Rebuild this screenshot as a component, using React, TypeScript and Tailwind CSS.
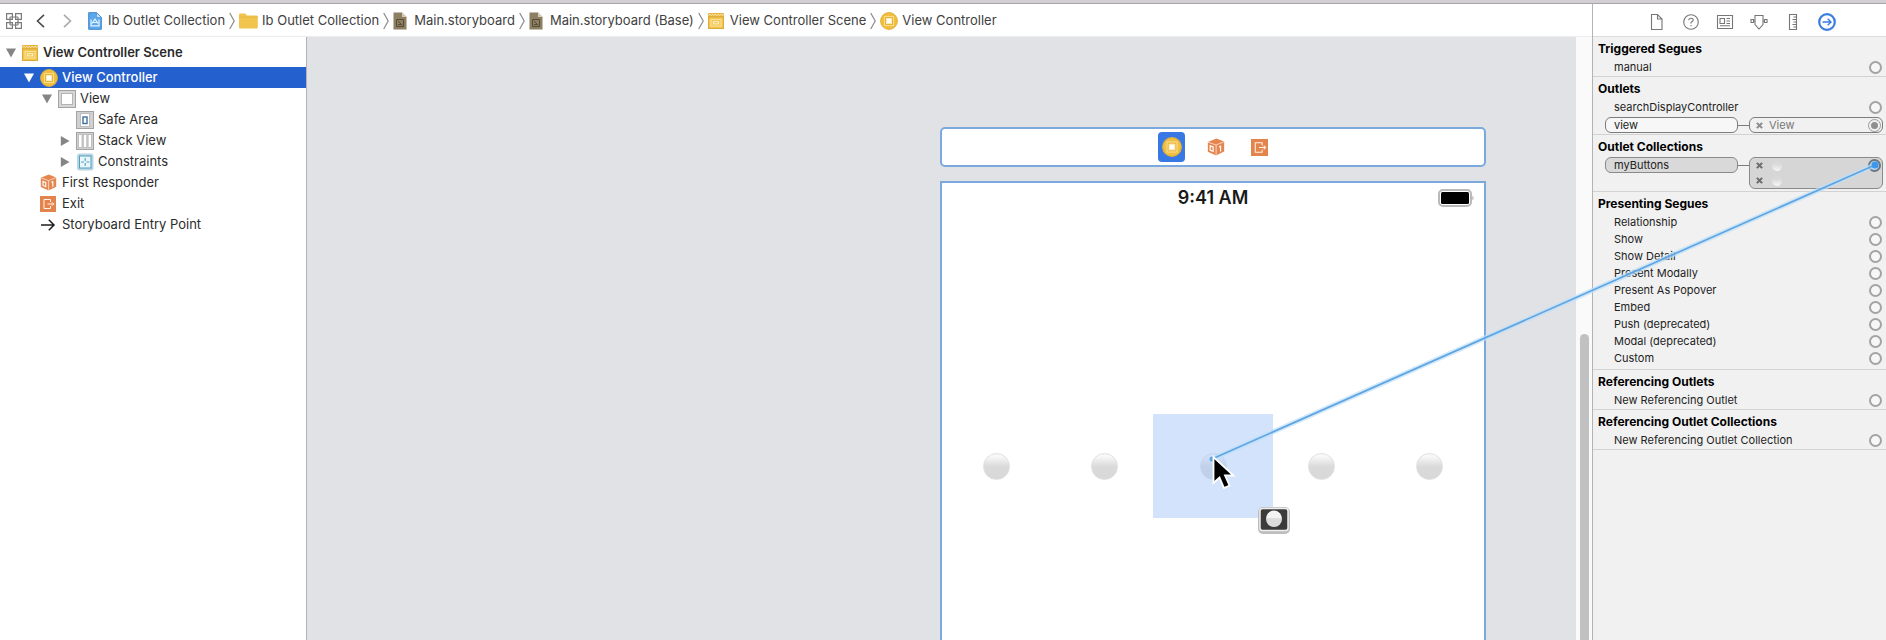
import React from "react";

type IconProps = { className?: string };

const SceneIcon = ({ className = "size-4" }: IconProps) => (
  <svg viewBox="0 0 16 16" className={className} aria-hidden="true">
    <rect x="0" y="0" width="16" height="16" rx="1" fill="#e5b440" />
    <rect x="0.5" y="4" width="15" height="11.5" fill="#f2c650" stroke="#dba936" />
    <path d="M0.6 2.6l1.4-1.4 1.4 1.4 1.4-1.4 1.4 1.4 1.4-1.4 1.4 1.4 1.4-1.4 1.4 1.4 1.4-1.4 1.4 1.4 1.4-1.4" fill="none" stroke="#fff3c4" strokeWidth="1" />
    <rect x="3" y="6.5" width="10" height="6.5" fill="none" stroke="#fbe39a" />
    <rect x="5.3" y="8.7" width="5.4" height="2.2" fill="#f2c650" stroke="#fff6d6" strokeWidth="0.9" />
  </svg>
);

const ControllerIcon = ({ className = "size-[18px]" }: IconProps) => (
  <svg viewBox="0 0 18 18" className={className} aria-hidden="true">
    <circle cx="9" cy="9" r="8.4" fill="#f0bf40" stroke="#e3b03a" strokeWidth="1" />
    <rect x="4.5" y="4.5" width="9" height="9" fill="#e9b335" stroke="#f9de8c" />
    <rect x="6.5" y="6.5" width="5" height="5" fill="#fff" stroke="#fbeab4" />
  </svg>
);

const FolderIcon = () => (
  <svg viewBox="0 0 19 16" className="h-4 w-[19px]" aria-hidden="true">
    <path d="M0 1.5Q0 0.5 1 0.5H6.2L8 2.5H17.5Q18.8 2.5 18.8 3.8V14.5Q18.8 15.6 17.6 15.6H1.2Q0 15.6 0 14.5Z" fill="#f1c44e" />
    <path d="M0 4H18.8" stroke="#e5b43e" strokeWidth="0.8" />
  </svg>
);

const ProjectIcon = () => (
  <svg viewBox="0 0 14 18" className="h-[18px] w-3.5" aria-hidden="true">
    <path d="M0.7 0.7H8.6L13.3 5.4V17.3H0.7Z" fill="#5ba8ec" stroke="#3f86cc" />
    <path d="M8.6 0.7V5.4H13.3Z" fill="#d4eafb" stroke="#3f86cc" strokeWidth="0.6" />
    <path d="M3 7.5V13.8H11V7.5M4 11.5L7 7 10 11.5M5 10.5H9" fill="none" stroke="#e6f4ff" strokeWidth="1.2" />
  </svg>
);

const StoryboardIcon = () => (
  <svg viewBox="0 0 14 18" className="h-[18px] w-3.5" aria-hidden="true">
    <path d="M0.5 0.5H9L13.5 5V17.5H0.5Z" fill="#8c7f62" />
    <path d="M9 0.5V5H13.5Z" fill="#d3cdbd" />
    <path d="M3.5 7.5H10.5V14.5H3.5Z M5 9L9.5 13.5 M5 12.5H8" fill="none" stroke="#574d36" strokeWidth="1" />
  </svg>
);

const ViewIcon = () => (
  <svg viewBox="0 0 18 18" className="size-[18px]" aria-hidden="true">
    <rect x="0.5" y="0.5" width="17" height="17" fill="#d6d6d6" stroke="#a3a3a3" />
    <rect x="3.5" y="3.5" width="11" height="11" fill="#fff" stroke="#b4b4b4" />
  </svg>
);

const SafeAreaIcon = () => (
  <svg viewBox="0 0 18 18" className="size-[18px]" aria-hidden="true">
    <rect x="0.5" y="0.5" width="17" height="17" fill="#d0d0d0" stroke="#a3a3a3" />
    <rect x="4.5" y="2.5" width="9" height="13" fill="#fff" stroke="#bdbdbd" />
    <rect x="7" y="6" width="4" height="6.5" fill="#fff" stroke="#3f6f9c" strokeWidth="1.4" />
  </svg>
);

const StackIcon = () => (
  <svg viewBox="0 0 18 18" className="size-[18px]" aria-hidden="true">
    <rect x="0.5" y="0.5" width="17" height="17" fill="#d0d0d0" stroke="#a3a3a3" />
    <rect x="2.5" y="2.5" width="3.5" height="13" fill="#fff" stroke="#b4b4b4" strokeWidth="0.8" />
    <rect x="7.3" y="2.5" width="3.5" height="13" fill="#fff" stroke="#b4b4b4" strokeWidth="0.8" />
    <rect x="12.1" y="2.5" width="3.5" height="13" fill="#fff" stroke="#b4b4b4" strokeWidth="0.8" />
  </svg>
);

const ConstraintsIcon = () => (
  <svg viewBox="0 0 18 18" className="size-[18px]" aria-hidden="true">
    <rect x="1" y="0.5" width="16.5" height="17" rx="2.5" fill="#b9d6e2" />
    <rect x="3.5" y="3" width="11.5" height="12" fill="#eaf6fb" stroke="#4f9fc0" />
    <path d="M9.2 5V8M9.2 10V13M5 9H8M10.4 9H13.4" stroke="#4f9fc0" strokeWidth="1.1" />
  </svg>
);

const ResponderIcon = ({ className = "size-[17px]" }: IconProps) => (
  <svg viewBox="0 0 17 17" className={className} aria-hidden="true">
    <path d="M8.8 0.4L16.2 3.4V12.8L8.6 16.6 0.8 13V3.8Z" fill="#e58650" />
    <path d="M0.8 3.9L8.6 6.6 16.2 3.5M8.6 6.6V16.4" fill="none" stroke="#fbe3d5" strokeWidth="0.8" />
    <path d="M11.4 8.6L12.8 7.8V12.8M3 7.4L5.8 8.4V12.6L3 11.4Z" fill="none" stroke="#fff" strokeWidth="1.1" />
  </svg>
);

const ExitIcon = ({ className = "size-4" }: IconProps) => (
  <svg viewBox="0 0 16 16" className={className} aria-hidden="true">
    <rect width="16" height="16" fill="#e4844d" />
    <path d="M10.500 6V3.500H4V12.500H10.500V10M7.500 8H13.500M12 6.300L13.700 8 12 9.700" fill="none" stroke="#fff2ea" strokeWidth="1" />
  </svg>
);

const EntryIcon = () => (
  <svg viewBox="0 0 16 16" className="size-4" aria-hidden="true">
    <path d="M1 8H14M8.8 2.8L14 8 8.8 13.2" fill="none" stroke="#1e1e1e" strokeWidth="1.5" />
  </svg>
);

const Crumb = ({ icon, label, gap = "gap-1.5", last }: { icon: React.ReactNode; label: string; gap?: string; last?: boolean }) => (
  <li className="flex items-center">
    <a href="#" className={`flex items-center whitespace-nowrap ${gap}`}>
      {icon}
      <span>{label}</span>
    </a>
    {!last && (
      <svg viewBox="0 0 6 18" className="mx-1 h-[18px] w-1.5" aria-hidden="true">
        <path d="M0.7 1L5.2 9 0.7 17" fill="none" stroke="#8a8a8a" strokeWidth="1.2" />
      </svg>
    )}
  </li>
);

const Triangle = ({ open, light }: { open?: boolean; light?: boolean }) => (
  <svg viewBox="0 0 10 10" className="size-2.5" aria-hidden="true">
    <path d={open ? "M0 0.5H10L5 9.5Z" : "M0.8 0L9.5 5 0.8 10Z"} fill={light ? "#fff" : "#858585"} />
  </svg>
);

type Node = { label: string; icon: React.ReactNode; pad: string; arrow?: "open" | "closed"; selected?: boolean };

const nodes: Node[] = [
  { label: "View Controller", icon: <ControllerIcon />, pad: "pl-6", arrow: "open", selected: true },
  { label: "View", icon: <ViewIcon />, pad: "pl-[42px]", arrow: "open" },
  { label: "Safe Area", icon: <SafeAreaIcon />, pad: "pl-[60px]" },
  { label: "Stack View", icon: <StackIcon />, pad: "pl-[60px]", arrow: "closed" },
  { label: "Constraints", icon: <ConstraintsIcon />, pad: "pl-[60px]", arrow: "closed" },
  { label: "First Responder", icon: <ResponderIcon />, pad: "pl-6" },
  { label: "Exit", icon: <ExitIcon />, pad: "pl-6" },
  { label: "Storyboard Entry Point", icon: <EntryIcon />, pad: "pl-6" },
];

const TreeRow = ({ node }: { node: Node }) => (
  <li className={`flex h-[21px] items-center ${node.pad} ${node.selected ? "bg-[#2560cf] font-medium text-white" : ""}`}>
    <span className="flex w-4 shrink-0">
      {node.arrow && (
        <button aria-label={`Toggle ${node.label}`}>
          <Triangle open={node.arrow === "open"} light={node.selected} />
        </button>
      )}
    </span>
    <span className="flex w-[22px] shrink-0">{node.icon}</span>
    <span className="whitespace-nowrap">{node.label}</span>
  </li>
);

const Ring = ({ label }: { label: string }) => (
  <button aria-label={`Connect ${label}`} className="size-[13px] shrink-0 rounded-full border-2 border-[#a3a3a3] bg-[#f7f7f7]" />
);

const Section = ({ title, children }: { title: string; children: React.ReactNode }) => (
  <section className="border-b border-[#d2d2d2]">
    <h2 className="flex h-[22px] items-center pt-px pl-[5px] text-xs font-bold text-black">{title}</h2>
    {children}
  </section>
);

const Item = ({ label }: { label: string }) => (
  <div className="flex h-[17px] items-center justify-between pr-1 pl-[21px]">
    <span>{label}</span>
    <Ring label={label} />
  </div>
);

const Clear = ({ label, dark }: { label: string; dark?: boolean }) => (
  <button aria-label={label} className="flex">
    <svg viewBox="0 0 8 8" className="size-[7px]" aria-hidden="true">
      <path d="M1 1L7 7M7 1L1 7" stroke={dark ? "#6c6c6c" : "#8c8c8c"} strokeWidth="2.400" />
    </svg>
  </button>
);

const Glossy = () => (
  <span className="size-[27px] rounded-full border border-[#e0e0e0] bg-linear-to-b from-[#f8f8f8] from-10% via-[#dadada] via-50% to-[#d8d8d8]" />
);

const segues = ["Relationship", "Show", "Show Detail", "Present Modally", "Present As Popover", "Embed", "Push (deprecated)", "Modal (deprecated)", "Custom"];

const inspectorTabs: { label: string; art: React.ReactNode; active?: boolean }[] = [
  { label: "File inspector", art: <path d="M3.5 1.5H9.5L14 6V16.5H3.5ZM9.5 1.5V6H14" /> },
  { label: "Quick help", art: <><circle cx="9" cy="9" r="7.3" /><path d="M6.8 7.2Q6.8 5.2 9 5.2T11.2 7.1Q11.2 8.2 9 9.4V10.6M9 12V13.2" /></> },
  { label: "Identity inspector", art: <><path d="M1.5 2.5H16.5V15.5H1.5ZM4 5.500H8.500V10.500H4ZM10.500 5.500H14M10.500 8H14M10.500 10.500H14M4 12.800H14" /></> },
  { label: "Attributes inspector", art: <path d="M5 2.5H13V11.500L9 16 5 11.500ZM5 8H3.500M13 8H14.500M1 6.500H3.500V9.500H1ZM14.500 6.500H17V9.500H14.500Z" /> },
  { label: "Size inspector", art: <path d="M5.5 1.5H12.5V16.5H5.5ZM9.5 4H12.5M8.5 6.5H12.5M9.5 9H12.5M8.5 11.5H12.5M9.5 14H12.5" /> },
  { label: "Connections inspector", active: true, art: <><circle cx="9" cy="9" r="7.800" strokeWidth="2.200" /><path d="M4.500 9H13M9.700 5.700L13 9 9.700 12.300" strokeWidth="1.400" /></> },
];

export default function App() {
  return (
    <div className="relative flex min-h-screen flex-col overflow-hidden bg-white font-['Inter','Liberation_Sans',sans-serif] text-[13px] text-[#2b2b2b]">
      <div className="h-1 border-b border-[#a6a4a8] bg-[#d1cfd2]" />
      <div className="flex flex-1">
        <div className="flex min-w-0 flex-1 flex-col">
          <nav aria-label="Jump bar" className="flex h-[33px] items-center border-b border-[#ececec] pt-0.5 text-[#414141]">
            <button aria-label="Related items" className="ml-1.5">
              <svg viewBox="0 0 16 16" className="size-4" fill="none" stroke="#7c7c7c" strokeWidth="1.2">
                <path d="M0.6 0.6H6.4V6.4H0.6ZM9.6 0.6H15.4V6.4H9.6ZM0.6 9.6H6.4V15.4H0.6ZM9.6 9.6H15.4V15.4H9.6ZM4 4H12M4 12H12M4 4V12M12 4V12" />
              </svg>
            </button>
            <button aria-label="Back" className="ml-3.5">
              <svg viewBox="0 0 9 14" className="h-3.5 w-[9px]"><path d="M8 0.8L1.5 7 8 13.2" fill="none" stroke="#4c4c4c" strokeWidth="1.6" /></svg>
            </button>
            <button aria-label="Forward" className="ml-[18px]">
              <svg viewBox="0 0 9 14" className="h-3.5 w-[9px]"><path d="M1 0.8L7.5 7 1 13.2" fill="none" stroke="#a9a9a9" strokeWidth="1.6" /></svg>
            </button>
            <ol className="ml-4 flex items-center">
              <Crumb icon={<ProjectIcon />} label="Ib Outlet Collection" />
              <Crumb icon={<FolderIcon />} label="Ib Outlet Collection" gap="gap-1" />
              <Crumb icon={<StoryboardIcon />} label="Main.storyboard" gap="gap-[7px]" />
              <Crumb icon={<StoryboardIcon />} label="Main.storyboard (Base)" gap="gap-[7px]" />
              <Crumb icon={<SceneIcon />} label="View Controller Scene" />
              <Crumb icon={<ControllerIcon />} label="View Controller" gap="gap-1" last />
            </ol>
          </nav>
          <div className="flex flex-1">
            <aside className="w-[307px] shrink-0 border-r border-[#b3b3b5] bg-white">
              <div className="flex h-[30px] items-center pt-0.5 pl-1.5 font-semibold">
                <button aria-label="Toggle scene" className="mr-1.5"><Triangle open /></button>
                <SceneIcon />
                <span className="ml-[5px]">View Controller Scene</span>
              </div>
              <ul>{nodes.map((n) => <TreeRow key={n.label} node={n} />)}</ul>
            </aside>
            <main className="flex min-w-0 flex-1 flex-col items-end bg-[#e1e2e6] pt-[90px] pr-[90px]">
              <div className="flex h-10 w-[546px] items-center justify-center gap-[22px] rounded-[5px] border-2 border-[#7ba9de] bg-white">
                <button aria-label="View Controller" className="flex h-[30px] w-[27px] items-center justify-center rounded bg-[#3878e5]"><ControllerIcon className="size-5" /></button>
                <button aria-label="First Responder"><ResponderIcon className="size-[18px]" /></button>
                <button aria-label="Exit" className="ml-1"><ExitIcon className="size-[17px]" /></button>
              </div>
              <div className="mt-3.5 flex w-[546px] flex-1 flex-col border-x-2 border-t-2 border-[#7ba9de] bg-white">
                <div className="grid h-[30px] grid-cols-3 items-center">
                  <span />
                  <span className="text-center text-lg font-semibold text-[#1a1a1a]">9:41 AM</span>
                  <svg viewBox="0 0 36 18" className="mr-2.5 h-[18px] w-9 justify-self-end" aria-hidden="true">
                    <rect x="1" y="1" width="32" height="16" rx="4" fill="#fff" stroke="#b9b9b9" strokeWidth="2" />
                    <rect x="3" y="3" width="28" height="12" rx="1.5" fill="#000" />
                    <path d="M34.500 6.500Q36.500 9 34.500 11.500Z" fill="#9a9a9a" />
                  </svg>
                </div>
                <div className="mt-[201px] flex h-[104px]">
                  {[0, 1, 2, 3, 4].map((i) => (
                    <button key={i} aria-label={`Button ${i + 1}`} className="relative flex flex-1 items-center justify-center">
                      <Glossy />
                      {i === 2 && <span className="absolute -inset-x-1.5 inset-y-0 bg-[#a5c8f8]/50" />}
                    </button>
                  ))}
                </div>
              </div>
            </main>
            <div className="flex w-4 shrink-0 flex-col items-center bg-[#fafafa]">
              <div className="mt-[297px] w-[9px] flex-1 rounded-t-full bg-[#c1c1c1]" />
            </div>
          </div>
        </div>
        <aside className="w-[294px] shrink-0 border-l border-[#b3b3b5] bg-[#f1f1f1] text-[11px] text-[#222]">
          <div className="flex h-[33px] items-center justify-center gap-4 border-b border-[#dcdcdc] bg-white pt-[3px] pl-[5px]">
            {inspectorTabs.map((t) => (
              <button key={t.label} aria-label={t.label}>
                <svg viewBox="0 0 18 18" className="size-[18px]" fill="none" stroke={t.active ? "#3b7de0" : "#767676"} strokeWidth="1.1">{t.art}</svg>
              </button>
            ))}
          </div>
          <Section title="Triggered Segues"><Item label="manual" /></Section>
          <Section title="Outlets">
            <Item label="searchDisplayController" />
            <div className="flex h-[18px] items-center pr-[3px] pl-3">
              <span className="flex h-4 w-[133px] items-center rounded-md border border-[#7c7c7c] bg-[#f7f7f7] pl-2">view</span>
              <span className="h-px w-[11px] bg-[#7c7c7c]" />
              <span className="flex h-4 flex-1 items-center rounded-md border border-[#7c7c7c] pl-1.5 text-[#777]">
                <Clear label="Disconnect view" />
                <span className="ml-1.5 flex-1">View</span>
                <span className="mr-px flex size-[13px] items-center justify-center rounded-full border border-[#9a9a9a]"><span className="size-[7px] rounded-full bg-[#8f8f8f]" /></span>
              </span>
            </div>
          </Section>
          <Section title="Outlet Collections">
            <div className="flex h-[34px] pr-[3px] pl-3">
              <span className="flex h-4 w-[133px] items-center rounded-md border border-[#8a8a8a] bg-[#d9d9d9] pl-2">myButtons</span>
              <span className="mt-2 h-px w-[11px] bg-[#7c7c7c]" />
              <span className="flex h-8 flex-1 justify-between rounded-md border border-[#8a8a8a] bg-[#d6d6d6] pl-1.5">
                <span className="flex flex-col">
                  {[1, 2].map((n) => (
                    <span key={n} className="flex h-[15px] items-center gap-[9px]">
                      <Clear label={`Disconnect button ${n}`} dark />
                      <span className="size-2.5 rounded-full bg-linear-to-b from-[#d9d9d9] from-30% to-[#f6f6f6]" />
                    </span>
                  ))}
                </span>
                <span className="mt-px mr-px size-[13px] rounded-full border-2 border-[#6d7680] bg-[#b9d9f5]" />
              </span>
            </div>
          </Section>
          <Section title="Presenting Segues">
            <div className="pb-0.5">{segues.map((s) => <Item key={s} label={s} />)}</div>
          </Section>
          <Section title="Referencing Outlets"><Item label="New Referencing Outlet" /></Section>
          <Section title="Referencing Outlet Collections"><Item label="New Referencing Outlet Collection" /></Section>
        </aside>
      </div>
      <svg viewBox="0 0 686 400" className="pointer-events-none absolute top-[150px] right-0 h-[400px] w-[686px]" aria-hidden="true">
        <path d="M12 309L675 15" stroke="#bfe0fa" strokeWidth="5" opacity="0.7" />
        <path d="M12 309L675 15" stroke="#5fa5e2" strokeWidth="1.7" />
        <circle cx="675" cy="15" r="3.5" fill="#3d97ea" />
        <circle cx="12" cy="309" r="2.5" fill="#5fa5e2" />
        <path d="M13.5 307V333L19.5 327.5 24 338 29.5 335.5 25 325.5H33.5Z" fill="#000" stroke="#fff" strokeWidth="1.8" />
        <rect x="58" y="357" width="32" height="27" rx="5" fill="#bdbdbd" />
        <rect x="60" y="358.5" width="28" height="22" rx="2.5" fill="#3b3b3b" stroke="#eee" strokeWidth="1.5" />
        <circle cx="74" cy="369" r="8" fill="#dcdcdc" />
        <path d="M66.5 368A7.5 7.5 0 0 1 81.5 368Z" fill="#f3f3f3" />
      </svg>
    </div>
  );
}
